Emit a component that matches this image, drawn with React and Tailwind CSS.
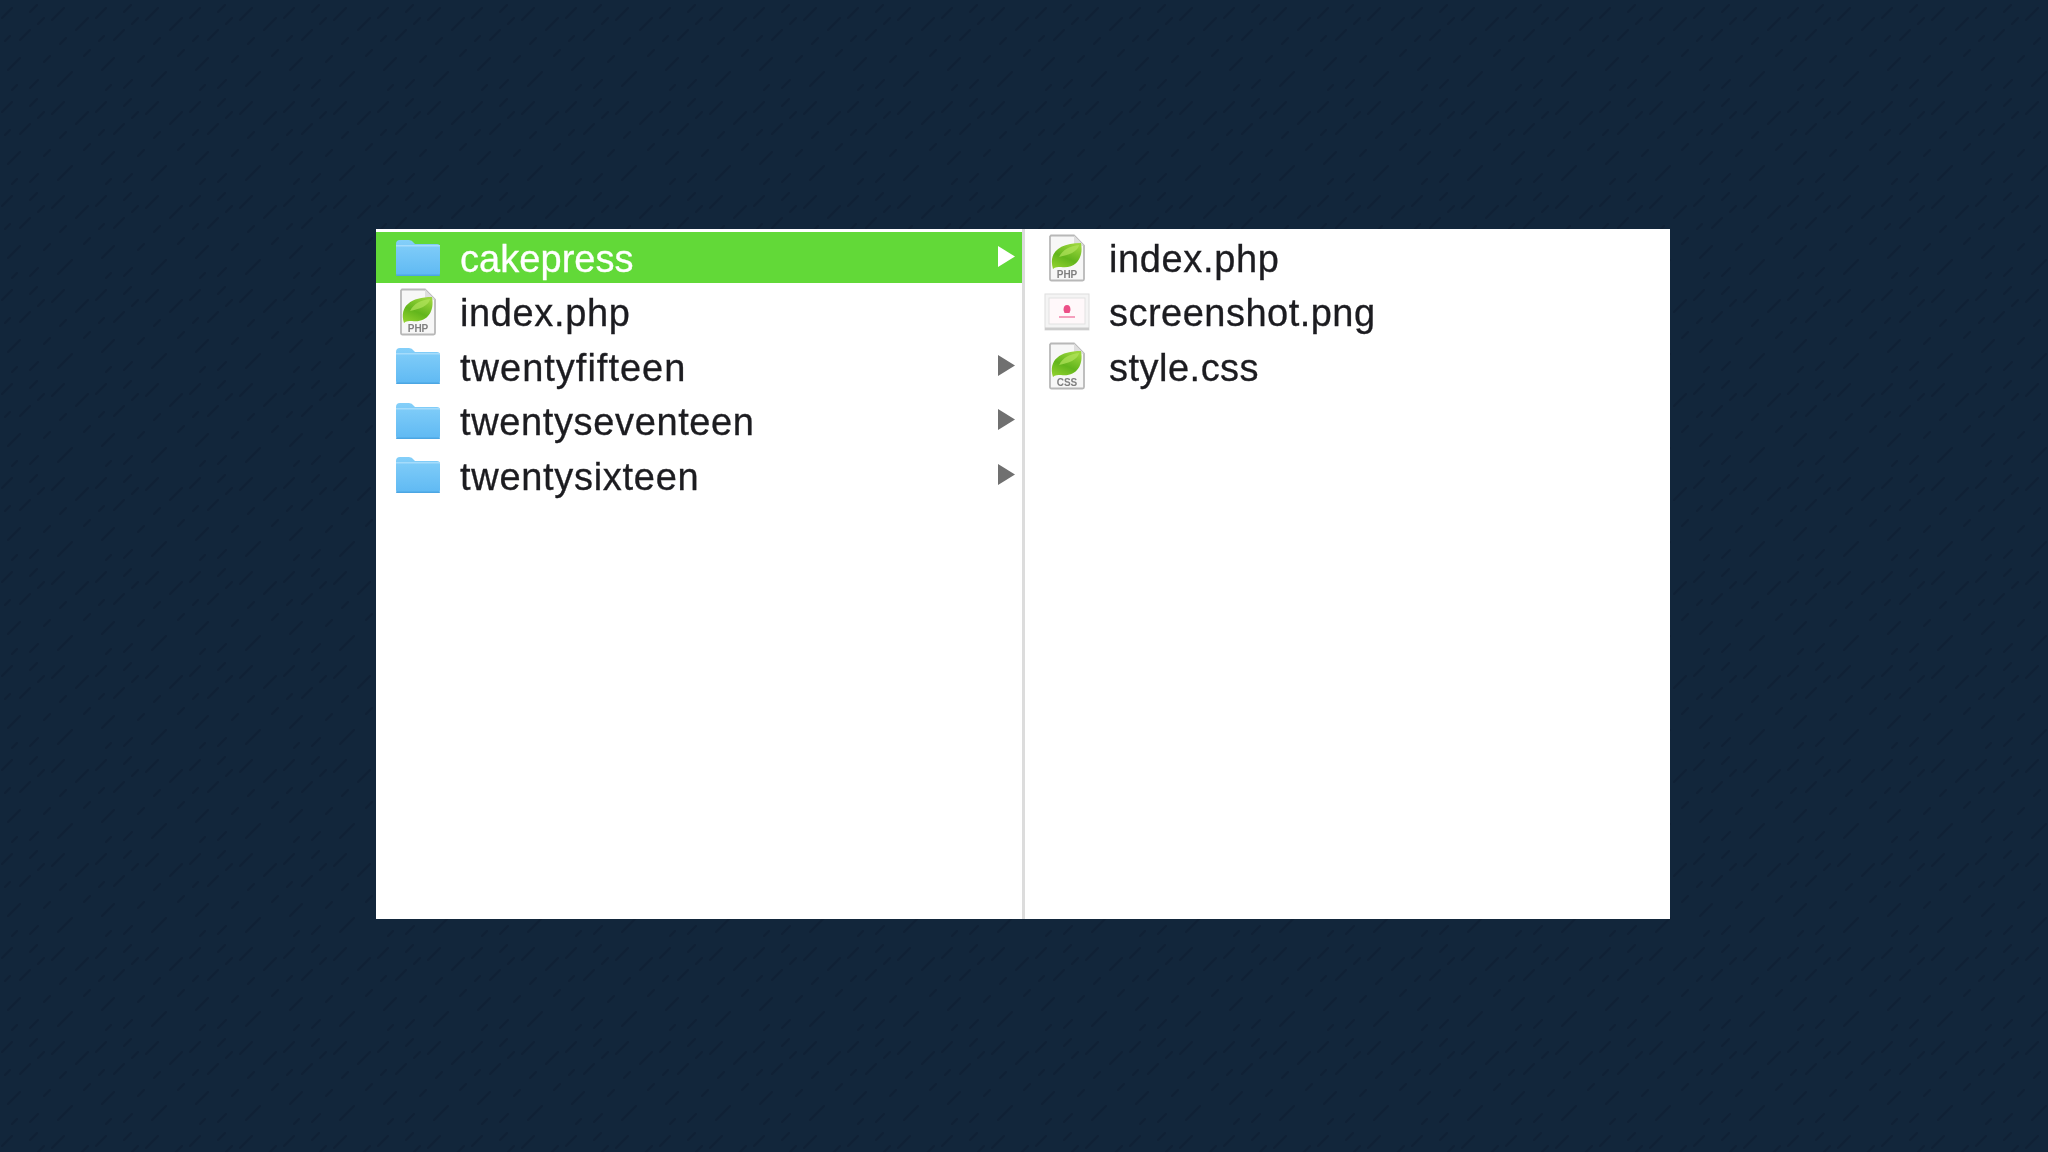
const leftRows = [
  { name: "cakepress", type: "folder", selected: true, tracking: "tracking-[0.05px]" },
  { name: "index.php", type: "php", tracking: "tracking-[0.63px]" },
  { name: "twentyfifteen", type: "folder", tracking: "tracking-[1px]" },
  { name: "twentyseventeen", type: "folder", tracking: "tracking-[0.63px]" },
  { name: "twentysixteen", type: "folder", tracking: "tracking-[0.7px]" },
];

const rightRows = [
  { name: "index.php", type: "php", tracking: "tracking-[0.63px]" },
  { name: "screenshot.png", type: "png", tracking: "tracking-[0.48px]" },
  { name: "style.css", type: "css", tracking: "tracking-[0.49px]" },
];

const Texture = () => (
  <svg className="absolute inset-0 h-full w-full" aria-hidden="true">
    <defs>
      <pattern id="weave" width="94" height="94" patternUnits="userSpaceOnUse">
        <g stroke="#0d1c30" strokeWidth="2.5" strokeLinecap="round" opacity="0.5">
          <path d="M2 18 L12 8" />
          <path d="M20 40 L30 30" />
          <path d="M30 12 L37 5" />
          <path d="M5 41 L10 36" />
          <path d="M38 24 L44 18" />
          <path d="M52 20 L64 8" />
          <path d="M60 44 L66 38" />
          <path d="M76 30 L88 18" />
          <path d="M8 70 L20 58" />
          <path d="M30 88 L38 80" />
          <path d="M44 62 L50 56" />
          <path d="M58 86 L72 72" />
          <path d="M84 56 L90 50" />
          <path d="M12 90 L17 85" />
        </g>
      </pattern>
      <linearGradient id="leaf" x1="0.7" y1="0" x2="0.2" y2="1">
        <stop offset="0" stopColor="#9ad53c" />
        <stop offset="0.55" stopColor="#62b51c" />
        <stop offset="1" stopColor="#8fd02e" />
      </linearGradient>
      <linearGradient id="folder" x1="0" y1="0" x2="0" y2="1">
        <stop offset="0" stopColor="#84cff9" />
        <stop offset="1" stopColor="#5fb9f3" />
      </linearGradient>
    </defs>
    <rect width="100%" height="100%" fill="url(#weave)" />
  </svg>
);

const FolderIcon = () => (
  <svg width="46" height="38" viewBox="0 0 46 38" aria-hidden="true">
    <path
      d="M1 5 Q1 1 5 1 H14 Q17 1 19 4 L20 5 H42 Q45 5 45 8 V34 Q45 37 42 37 H4 Q1 37 1 34 Z"
      fill="url(#folder)"
    />
    <rect x="1" y="6" width="44" height="1.5" fill="#a5dcfb" />
    <rect x="1" y="35.5" width="44" height="1.5" rx="0.75" fill="#4ca6e3" />
  </svg>
);

const DocIcon = ({ label }) => (
  <svg width="38" height="48" viewBox="0 0 38 48" aria-hidden="true">
    <path
      d="M3 1.5 H26 L36 11.5 V45 Q36 46.5 34.5 46.5 H3.5 Q2 46.5 2 45 V2.5 Z"
      fill="#f7f7f7"
      stroke="#b8b8b8"
      strokeWidth="1.8"
    />
    <path d="M26 1.5 V11.5 H36 Z" fill="#dedede" />
    <path d="M5 35 C0 18 12 9 33 9 C36 25 27 35 13 33 C10 33 7 33 5 35 Z" fill="url(#leaf)" />
    <path d="M11 23 C15 15 22 12 31 11 C30 18 20 21 11 23 Z" fill="#b2e45c" opacity="0.7" />
    <text
      x="19"
      y="44"
      textAnchor="middle"
      fontSize="10"
      fontWeight="700"
      fill="#808080"
      fontFamily="'Liberation Sans', sans-serif"
    >
      {label}
    </text>
  </svg>
);

const PngIcon = () => (
  <svg width="46" height="38" viewBox="0 0 46 38" aria-hidden="true">
    <rect x="1" y="1" width="44" height="36" fill="#f4f4f4" stroke="#dedede" />
    <rect x="1" y="34.5" width="44" height="2.5" fill="#cccccc" />
    <rect x="5" y="5" width="36" height="26" fill="#fff8fa" stroke="#e2e2e2" />
    <path d="M19.5 17 Q19.5 12 23 12 Q26.5 12 26.5 17 L25.5 20 H20.5 Z" fill="#ec4f87" />
    <rect x="15" y="23" width="16" height="2" fill="#f4a0bd" />
  </svg>
);

const FileIcon = ({ type }) => {
  if (type === "folder") return <FolderIcon />;
  if (type === "png") return <PngIcon />;
  return <DocIcon label={type.toUpperCase()} />;
};

const Arrow = ({ selected }) => (
  <svg className="ml-auto mr-[6px] -mt-[2px]" width="19" height="23" viewBox="0 0 19 23" aria-hidden="true">
    <path d="M1 1 L18 11.5 L1 22 Z" fill={selected ? "#ffffff" : "#707070"} />
  </svg>
);

const Row = ({ row, showArrow }) => (
  <div
    className={`flex h-[51px] items-center ${row.selected ? "bg-[#62d938] text-white" : "text-[#1c1c20]"}`}
  >
    <div className="flex w-[84px] justify-center blur-[0.4px]">
      <FileIcon type={row.type} />
    </div>
    <span
      className={`pt-[3px] text-[38px] leading-none [font-kerning:none] [font-variant-ligatures:none] [-webkit-text-stroke:0.3px] blur-[0.4px] ${row.tracking}`}
    >
      {row.name}
    </span>
    {showArrow && row.type === "folder" && <Arrow selected={row.selected} />}
  </div>
);

export default function App() {
  return (
    <div className="relative h-[1152px] w-full overflow-hidden bg-[#12263b] pl-[376px] pt-[229px] font-['Liberation_Sans',Arial,sans-serif]">
      <Texture />
      <div className="relative flex h-[690px] w-[1294px] bg-white pt-[3px]">
        <div className="flex w-[646px] shrink-0 flex-col gap-[3.4px]">
          {leftRows.map((row) => (
            <Row key={row.name} row={row} showArrow />
          ))}
        </div>
        <div className="-mt-[3px] w-[3px] shrink-0 bg-[#dcdcdc]" />
        <div className="flex flex-1 flex-col gap-[3.4px]">
          {rightRows.map((row) => (
            <Row key={row.name} row={row} />
          ))}
        </div>
      </div>
    </div>
  );
}
